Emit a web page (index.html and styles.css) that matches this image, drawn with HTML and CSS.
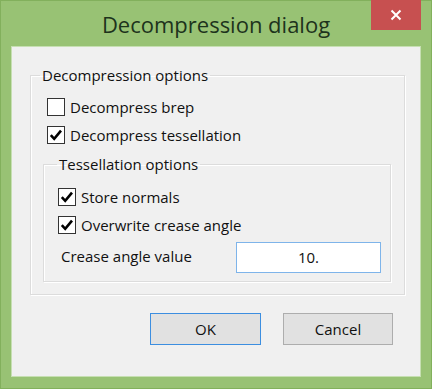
FILE: index.html
```html
<!DOCTYPE html>
<html>
<head>
<meta charset="utf-8">
<link rel="stylesheet" href="styles.css">
</head>
<body>
<div class="window">
  <div class="titlebar">
    <div class="spacer"></div>
    <div class="title">Decompression dialog</div>
    <div class="controls">
      <div class="close">
        <svg width="12" height="12" viewBox="0 0 12 12"><path d="M1.5 1.5 L10.5 10.5 M10.5 1.5 L1.5 10.5" stroke="#fff" stroke-width="2" fill="none"/></svg>
      </div>
    </div>
  </div>
  <div class="client">
    <fieldset class="group outer">
      <legend>Decompression options</legend>
      <label class="row check">
        <span class="box"></span>
        <span>Decompress brep</span>
      </label>
      <label class="row check">
        <span class="box"><svg width="16" height="16" viewBox="0 0 16 16"><path d="M2.8 8.2 L6.2 11.8 L13 3.6" stroke="#000" stroke-width="2.6" fill="none"/></svg></span>
        <span>Decompress tessellation</span>
      </label>
      <fieldset class="group inner">
        <legend>Tessellation options</legend>
        <label class="row check">
          <span class="box"><svg width="16" height="16" viewBox="0 0 16 16"><path d="M2.8 8.2 L6.2 11.8 L13 3.6" stroke="#000" stroke-width="2.6" fill="none"/></svg></span>
          <span>Store normals</span>
        </label>
        <label class="row check">
          <span class="box"><svg width="16" height="16" viewBox="0 0 16 16"><path d="M2.8 8.2 L6.2 11.8 L13 3.6" stroke="#000" stroke-width="2.6" fill="none"/></svg></span>
          <span>Overwrite crease angle</span>
        </label>
        <div class="valuerow">
          <span class="vlabel">Crease angle value</span>
          <div class="input">10.</div>
        </div>
      </fieldset>
    </fieldset>
    <div class="buttons">
      <button class="btn default">OK</button>
      <button class="btn">Cancel</button>
    </div>
  </div>
</div>
</body>
</html>
```
FILE: styles.css
```css
* { box-sizing: border-box; }
html, body { margin: 0; padding: 0; background: #98c274; }
body { font-family: "Segoe UI", "Open Sans", sans-serif; font-size: 15px; color: #111; }

.window {
  width: 432px;
  height: 389px;
  border: 1px solid #82b05c;
  background: #98c274;
  display: flex;
  flex-direction: column;
}

.titlebar {
  height: 45px;
  display: grid;
  grid-template-columns: 1fr auto 1fr;
  align-items: start;
}
.title {
  font-family: "Segoe UI", "Open Sans", sans-serif;
  font-size: 22px;
  color: #1d331c;
  line-height: 28px;
  margin-top: 9px;
  white-space: nowrap;
}
.controls { display: flex; justify-content: flex-end; padding-right: 10px; }
.close {
  width: 50px;
  height: 30px;
  margin-top: -1px;
  background: #c75050;
  display: flex;
  align-items: center;
  justify-content: center;
}

.client {
  margin: 0 10px 11px;
  height: 331px;
  border: 1px solid #c6dfb2;
  background: #f0f0f0;
  padding: 18px 15px 0 18px;
}

.group {
  margin: 0;
  border: 1px solid #dcdcdc;
  box-shadow: inset 1px 1px 0 #fff, 1px 1px 0 #fff;
  min-width: 0;
}
.group legend {
  line-height: 20px;
  padding: 0 2px;
}
.outer { padding: 8px 13px 12px 12px; }
.outer > legend { margin-left: -3px; }
.inner { padding: 9px 9px 8px 14px; margin-top: 5px; }
.inner > legend { margin-left: -1px; }

.row {
  display: flex;
  align-items: center;
  height: 28px;
  gap: 5px;
}
.outer > .row { padding-left: 4px; }
.box {
  width: 18px;
  height: 18px;
  border: 1px solid #333;
  background: #fff;
  display: flex;
  align-items: center;
  justify-content: center;
}

.valuerow {
  display: flex;
  align-items: center;
  margin-top: 3px;
  justify-content: space-between;
  padding-left: 3px;
}
.vlabel { margin-top: -4px; }
.input {
  width: 145px;
  height: 31px;
  border: 1px solid #7eb4ea;
  background: #fff;
  text-align: center;
  line-height: 29px;
}

.buttons {
  display: flex;
  justify-content: flex-end;
  gap: 22px;
  margin-top: 18px;
  padding-right: 12px;
}
.btn {
  width: 110px;
  height: 32px;
  border: 1px solid #adadad;
  background: #e1e1e1;
  font-family: inherit;
  font-size: 15px;
  color: #111;
  padding: 0;
}
.btn.default {
  width: 111px;
  border-color: #3c8ee0;
}
```
